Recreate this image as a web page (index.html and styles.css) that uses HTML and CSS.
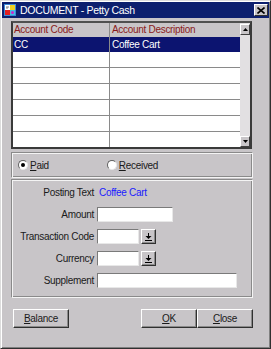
FILE: index.html
```html
<!DOCTYPE html>
<html>
<head>
    <title>DOCUMENT - Petty Cash</title>
    <link rel="stylesheet" href="styles.css">
</head>
<body>
    <div class="window">
        <div class="titlebar">
            <svg class="app-icon" width="14" height="14" viewBox="0 0 14 14">
                <rect x="1" y="1" width="12" height="12" fill="#3a8ad8"/>
                <rect x="2" y="2" width="5" height="5" fill="#ffffff"/>
                <rect x="7" y="2" width="5" height="5" fill="#f0d020"/>
                <rect x="2" y="7" width="5" height="5" fill="#e02020"/>
                <rect x="7" y="7" width="5" height="5" fill="#40c0e0"/>
                <path d="M3 4h3M3 5h2" stroke="#808080" stroke-width="1"/>
                <circle cx="9.5" cy="9.5" r="1.5" fill="#d020d0"/>
            </svg>
            <span class="title">DOCUMENT - Petty Cash</span>
            <span class="close-box">
                <svg width="8" height="7" viewBox="0 0 8 7">
                    <path d="M0.5 0.5L7.5 6.5M7.5 0.5L0.5 6.5" stroke="#000" stroke-width="1.6"/>
                </svg>
            </span>
        </div>

        <div class="content">
            <div class="grid-frame">
                <div class="grid">
                    <div class="grid-head">
                        <span class="c1">Account Code</span>
                        <span class="c2">Account Description</span>
                    </div>
                    <div class="row selected">
                        <span class="c1">CC</span>
                        <span class="c2">Coffee Cart</span>
                    </div>
                    <div class="row"><span class="c1"></span><span class="c2"></span></div>
                    <div class="row"><span class="c1"></span><span class="c2"></span></div>
                    <div class="row"><span class="c1"></span><span class="c2"></span></div>
                    <div class="row"><span class="c1"></span><span class="c2"></span></div>
                    <div class="row"><span class="c1"></span><span class="c2"></span></div>
                    <div class="row"><span class="c1"></span><span class="c2"></span></div>
                </div>
                <div class="scrollbar">
                    <div class="sb-btn">
                        <svg width="5" height="3" viewBox="0 0 5 3"><path d="M0 3L2.5 0L5 3Z" fill="#000"/></svg>
                    </div>
                    <div class="sb-btn">
                        <svg width="5" height="3" viewBox="0 0 5 3"><path d="M0 0L2.5 3L5 0Z" fill="#000"/></svg>
                    </div>
                </div>
            </div>

            <div class="panel radio-panel">
                <label class="radio-opt">
                    <span class="radio checked"></span>
                    <span><u>P</u>aid</span>
                </label>
                <label class="radio-opt received">
                    <span class="radio"></span>
                    <span><u>R</u>eceived</span>
                </label>
            </div>

            <div class="panel form-panel">
                <span class="lbl">Posting Text</span>
                <span class="value">Coffee Cart</span>

                <span class="lbl">Amount</span>
                <span class="field"><span class="input w-amount"></span></span>

                <span class="lbl">Transaction Code</span>
                <span class="field">
                    <span class="input w-code"></span>
                    <span class="drop-btn">
                        <svg width="7" height="8" viewBox="0 0 7 8"><path d="M3.5 0V3" stroke="#000" stroke-width="1"/><path d="M0.5 3H6.5L3.5 6Z" fill="#000"/><path d="M0 7.5H7" stroke="#000" stroke-width="1"/></svg>
                    </span>
                </span>

                <span class="lbl">Currency</span>
                <span class="field">
                    <span class="input w-code"></span>
                    <span class="drop-btn">
                        <svg width="7" height="8" viewBox="0 0 7 8"><path d="M3.5 0V3" stroke="#000" stroke-width="1"/><path d="M0.5 3H6.5L3.5 6Z" fill="#000"/><path d="M0 7.5H7" stroke="#000" stroke-width="1"/></svg>
                    </span>
                </span>

                <span class="lbl">Supplement</span>
                <span class="field"><span class="input w-supp"></span></span>
            </div>

            <div class="buttons">
                <button class="btn"><u>B</u>alance</button>
                <span class="spacer"></span>
                <button class="btn"><u>O</u>K</button>
                <button class="btn"><u>C</u>lose</button>
            </div>
        </div>
    </div>
</body>
</html>
```

FILE: styles.css
```css
body {
    margin: 0;
    font-family: "Liberation Sans", Arial, sans-serif;
    font-size: 10px;
    letter-spacing: -0.3px;
    color: #1a1a1a;
}

.window {
    width: 271px;
    height: 349px;
    box-sizing: border-box;
    background-color: #c8c5c8;
    border: 1px solid;
    border-color: #dcdcdc #303030 #303030 #dcdcdc;
    box-shadow: inset 1px 1px #ffffff, inset -1px -1px #808080;
    padding: 1px;
}

.titlebar {
    height: 16px;
    background-color: #0c1f6e;
    color: #ffffff;
    display: flex;
    align-items: center;
    padding-left: 1px;
}

.app-icon {
    flex: none;
}

.title {
    margin-left: 3px;
    font-size: 10.5px;
}

.close-box {
    margin-left: auto;
    margin-right: 1px;
    width: 14px;
    height: 12px;
    box-sizing: border-box;
    background-color: #c8c5c8;
    border: 1px solid;
    border-color: #ffffff #303030 #303030 #ffffff;
    display: flex;
    align-items: center;
    justify-content: center;
}

.content {
    padding: 3px 0 0 9px;
}

/* list of accounts */
.grid-frame {
    display: flex;
    width: 241px;
    height: 128px;
    box-sizing: border-box;
    border: 2px solid #3a3a3a;
    border-top-color: #505050;
    background-color: #ffffff;
}

.grid {
    width: 227px;
    overflow: hidden;
}

.grid-head, .row {
    display: flex;
    box-sizing: border-box;
}

.grid-head {
    height: 14px;
    line-height: 14px;
    background-color: #c8c5c8;
    color: #8a1a1a;
}

.row {
    height: 16px;
    line-height: 15px;
    border-bottom: 1px solid #8a8a8a;
}

.row.selected {
    height: 15px;
    background-color: #0c1470;
    color: #ffffff;
    border-bottom: none;
}

.c1 {
    width: 97px;
    flex: none;
    padding-left: 1px;
    box-sizing: border-box;
    border-right: 1px solid #8a8a8a;
}

.c2 {
    padding-left: 2px;
}

.scrollbar {
    width: 10px;
    background-color: #e2e0e2;
    display: flex;
    flex-direction: column;
    justify-content: space-between;
    padding: 1px 0 0 0;
}

.sb-btn {
    height: 11px;
    box-sizing: border-box;
    background-color: #c8c5c8;
    border: 1px solid;
    border-color: #ffffff #404040 #404040 #ffffff;
    display: flex;
    align-items: center;
    justify-content: center;
}

/* etched group boxes */
.panel {
    width: 242px;
    box-sizing: border-box;
    border: 1px solid #8a8a8a;
    border-right-color: #f4f4f4;
    border-bottom-color: #f4f4f4;
    box-shadow: inset 1px 1px #f4f4f4, inset -1px -1px #8a8a8a;
}

.radio-panel {
    margin-top: 3px;
    height: 26px;
    display: flex;
    align-items: center;
    padding-left: 6px;
}

.radio-opt {
    display: flex;
    align-items: center;
    gap: 2px;
}

.radio-opt.received {
    margin-left: 58px;
}

.radio {
    width: 10px;
    height: 10px;
    box-sizing: border-box;
    border-radius: 50%;
    background-color: #ffffff;
    border: 1px solid;
    border-color: #606060 #e8e8e8 #e8e8e8 #606060;
    display: flex;
    align-items: center;
    justify-content: center;
}

.radio.checked::after {
    content: "";
    width: 4px;
    height: 4px;
    border-radius: 50%;
    background-color: #000000;
}

.form-panel {
    margin-top: 1px;
    height: 119px;
    padding-top: 5px;
    display: grid;
    grid-template-columns: 82px 1fr;
    grid-auto-rows: 15px;
    row-gap: 7px;
    column-gap: 3px;
    align-items: center;
}

.lbl {
    text-align: right;
    white-space: nowrap;
}

.value {
    color: #1a1aff;
    padding-left: 2px;
}

.field {
    display: flex;
    align-items: center;
    gap: 2px;
}

.input {
    height: 15px;
    box-sizing: border-box;
    background-color: #ffffff;
    border: 1px solid;
    border-color: #7a7a7a #e8e8e8 #e8e8e8 #7a7a7a;
}

.w-amount {
    width: 76px;
}

.w-code {
    width: 42px;
}

.w-supp {
    width: 140px;
}

.drop-btn {
    width: 15px;
    height: 15px;
    box-sizing: border-box;
    background-color: #c8c5c8;
    border: 1px solid;
    border-color: #ffffff #303030 #303030 #ffffff;
    box-shadow: inset -1px -1px #8a8a8a;
    display: flex;
    align-items: center;
    justify-content: center;
}

/* bottom buttons */
.buttons {
    display: flex;
    width: 242px;
    margin-top: 11px;
    padding-left: 2px;
    box-sizing: border-box;
}

.spacer {
    flex: 1;
}

.btn {
    width: 56px;
    height: 19px;
    padding: 0;
    font-family: inherit;
    font-size: 10px;
    letter-spacing: -0.3px;
    color: #1a1a1a;
    background-color: #c8c5c8;
    border: 1px solid;
    border-color: #ffffff #303030 #303030 #ffffff;
    box-shadow: inset -1px -1px #8a8a8a;
}
```
